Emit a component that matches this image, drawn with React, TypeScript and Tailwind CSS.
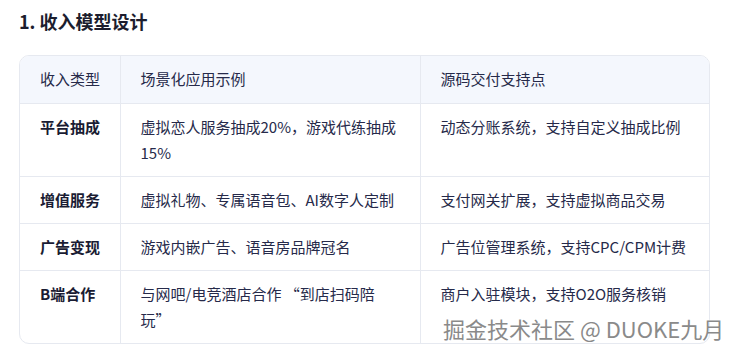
const rows = [
  { type: '平台抽成', example: '虚拟恋人服务抽成20%，游戏代练抽成15%', support: '动态分账系统，支持自定义抽成比例' },
  { type: '增值服务', example: '虚拟礼物、专属语音包、AI数字人定制', support: '支付网关扩展，支持虚拟商品交易' },
  { type: '广告变现', example: '游戏内嵌广告、语音房品牌冠名', support: '广告位管理系统，支持CPC/CPM计费' },
  // the reference wraps before 玩 (full-width quote there)
  { type: 'B端合作', example: '与网吧/电竞酒店合作 “到店扫码陪\n玩”', support: '商户入驻模块，支持O2O服务核销' },
]

export default function App() {
  return (
    <div
      className="relative w-[743px] h-[355px] bg-white overflow-hidden"
      style={{ fontFamily: '"Noto Sans CJK SC", "Noto Sans", sans-serif' }}
    >
      <h3 className="pl-[19px] pt-[8px] text-[18px] leading-[26px] font-bold text-[#1c1d2e]">
        1. 收入模型设计
      </h3>
      <div className="ml-[19px] mt-[21px] w-[691px] border border-[#e6e9f0] rounded-[10px] overflow-hidden">
        <table className="w-full border-collapse table-fixed text-[15px] leading-[26px] text-[#262a4a]">
          <colgroup>
            <col className="w-[100px]" />
            <col className="w-[300px]" />
            <col />
          </colgroup>
          <thead>
            <tr className="bg-[#f4f7fd]">
              <th className="px-[20px] pt-[10px] pb-[11px] text-left font-normal whitespace-nowrap border-r border-b border-[#e6e9f0]">收入类型</th>
              <th className="px-[20px] pt-[10px] pb-[11px] text-left font-normal border-r border-b border-[#e6e9f0]">场景化应用示例</th>
              <th className="px-[20px] pt-[10px] pb-[11px] text-left font-normal border-b border-[#e6e9f0]">源码交付支持点</th>
            </tr>
          </thead>
          <tbody>
            {rows.map((r, i) => {
              const last = i === rows.length - 1
              return (
                <tr key={r.type} className="align-top">
                  <td className={`px-[20px] py-[10px] font-bold whitespace-nowrap text-[#1a1c33] border-r border-[#e6e9f0] ${last ? '' : 'border-b'}`}>
                    {r.type}
                  </td>
                  <td className={`px-[20px] py-[10px] whitespace-pre-line border-r border-[#e6e9f0] ${last ? '' : 'border-b'}`}>
                    {r.example}
                  </td>
                  <td className={`px-[20px] py-[10px] border-[#e6e9f0] ${last ? '' : 'border-b'}`}>
                    {r.support}
                  </td>
                </tr>
              )
            })}
          </tbody>
        </table>
      </div>
      <div className="absolute left-[443px] top-[313px] text-[22px] leading-[30px] text-[#8a8a8a] [text-shadow:0_0_2px_#fff,0_0_1px_#fff] whitespace-nowrap">
        掘金技术社区 @ DUOKE九月
      </div>
    </div>
  )
}
